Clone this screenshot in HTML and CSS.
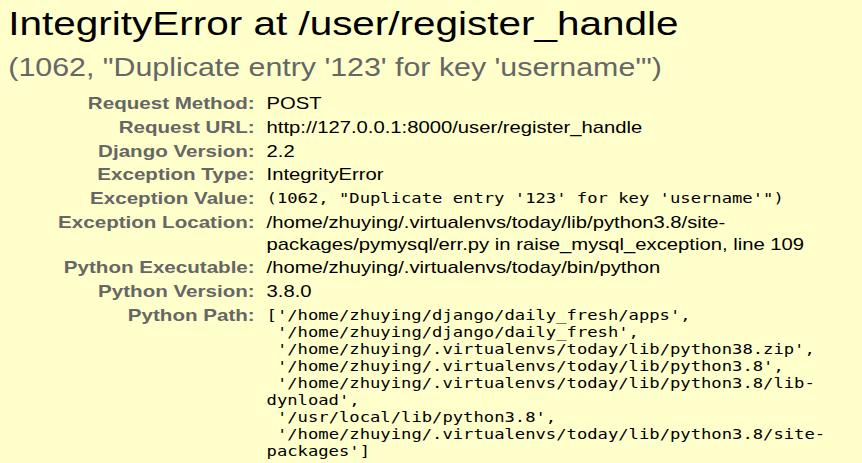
FILE: index.html
```html
<!DOCTYPE html>
<html>
<head>
<meta charset="utf-8">
<link rel="stylesheet" href="styles.css">
</head>
<body>
<div class="summary">
  <h1 class="title">IntegrityError at /user/register_handle</h1>
  <pre class="exception-value">(1062, "Duplicate entry '123' for key 'username'")</pre>
  <table class="meta">
    <tbody>
      <tr><th>Request Method:</th><td>POST</td></tr>
      <tr><th>Request URL:</th><td>http://127.0.0.1:8000/user/register_handle</td></tr>
      <tr><th>Django Version:</th><td>2.2</td></tr>
      <tr><th>Exception Type:</th><td>IntegrityError</td></tr>
      <tr><th>Exception Value:</th><td><pre class="code">(1062, "Duplicate entry '123' for key 'username'")</pre></td></tr>
      <tr><th>Exception Location:</th><td>/home/zhuying/.virtualenvs/today/lib/python3.8/site-packages/pymysql/err.py in raise_mysql_exception, line 109</td></tr>
      <tr><th>Python Executable:</th><td>/home/zhuying/.virtualenvs/today/bin/python</td></tr>
      <tr><th>Python Version:</th><td>3.8.0</td></tr>
      <tr><th>Python Path:</th><td><pre class="code">['/home/zhuying/django/daily_fresh/apps',
 '/home/zhuying/django/daily_fresh',
 '/home/zhuying/.virtualenvs/today/lib/python38.zip',
 '/home/zhuying/.virtualenvs/today/lib/python3.8',
 '/home/zhuying/.virtualenvs/today/lib/python3.8/lib-dynload',
 '/usr/local/lib/python3.8',
 '/home/zhuying/.virtualenvs/today/lib/python3.8/site-packages']</pre></td></tr>
    </tbody>
  </table>
</div>
</body>
</html>
```
FILE: styles.css
```css
html, body {
  margin: 0;
  padding: 0;
  background: #ffffcc;
  overflow: hidden;
}
body {
  font-family: "Liberation Sans", Arial, sans-serif;
  font-size: 17px;
  color: #000;
}
.summary {
  width: 724px;
  box-sizing: border-box;
  padding: 4px 7px 20px 7px;
  background: #ffffcc;
  transform: scaleX(1.19);
  transform-origin: 0 0;
}
.title {
  margin: 0 0 10px 0;
  font-size: 34px;
  font-weight: normal;
  line-height: 39px;
}
.exception-value {
  font-family: "Liberation Sans", Arial, sans-serif;
  font-size: 25.5px;
  color: #666;
  margin: 0 0 10px 0;
  line-height: 29px;
  white-space: pre-wrap;
}
.meta {
  border: none;
  border-collapse: collapse;
  width: 100%;
}
.meta th {
  text-align: right;
  vertical-align: top;
  color: #666;
  font-weight: bold;
  font-size: 17.3px;
  padding: 1px 6px 1px 3px;
  width: 204px;
  line-height: 21.75px;
  white-space: nowrap;
}
.meta td {
  vertical-align: top;
  padding: 1px 4px;
  line-height: 21.75px;
}
.code {
  margin: 0;
  font-family: "DejaVu Sans Mono", monospace;
  font-size: 14.45px;
  line-height: 17px;
  white-space: pre-wrap;
  padding-top: 2px;
}
```
